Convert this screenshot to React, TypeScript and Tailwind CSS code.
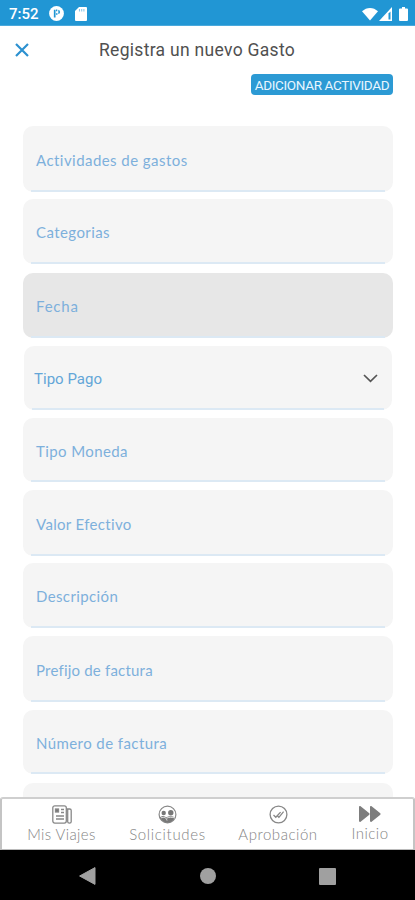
import React from "react";

type Field = { label: string; box: string; text: string; select?: boolean };

const fields: Field[] = [
  { label: "Actividades de gastos", box: "h-[66px] mb-[7px]", text: "tracking-[0.45px]" },
  { label: "Categorias", box: "h-[65px] mb-[9px]", text: "tracking-[0.42px]" },
  { label: "Fecha", box: "h-[65px] mb-[8px] bg-[#e7e7e7]", text: "tracking-[0.8px]" },
  { label: "Tipo Pago", box: "h-[64px] mb-[8px] mx-px", text: "", select: true },
  { label: "Tipo Moneda", box: "h-[64px] mb-[8px]", text: "tracking-[0.4px]" },
  { label: "Valor Efectivo", box: "h-[66px] mb-[7px]", text: "tracking-[0.33px]" },
  { label: "Descripción", box: "h-[65px] mb-[8px]", text: "tracking-[0.38px]" },
  { label: "Prefijo de factura", box: "h-[66px] mb-[8px]", text: "tracking-[0.2px]" },
  { label: "Número de factura", box: "h-[64px] mb-[9px]", text: "tracking-[0.42px]" },
  { label: "", box: "h-[65px]", text: "" },
];

function FieldRow({ label, box, text, select }: Field) {
  return (
    <div className={`flex shrink-0 flex-col rounded-[10px] ${box} ${box.includes("bg-") ? "" : "bg-[#f5f5f5]"}`}>
      <div className={`flex flex-1 items-center justify-between pt-[3px] ${select ? "pl-[10px] pr-[14px]" : "pl-[13px]"}`}>
        <span
          className={
            select
              ? "font-[Roboto,sans-serif] text-[15px] leading-5 tracking-[0.02px] text-[#63a6d8]"
              : `font-[Lato,sans-serif] text-[15px] leading-5 text-[#7db0dc] ${text}`
          }
        >
          {label}
        </span>
        {select && (
          <svg className="h-[9px] w-[15px]" viewBox="0 0 15 9" fill="none" stroke="#555" strokeWidth="1.7">
            <path d="M1 1l6.500 6.400L14 1" />
          </svg>
        )}
      </div>
      <div className="mx-[8px] h-[2px] bg-[#dce9f4]" />
    </div>
  );
}

export default function App() {
  return (
    <div className="flex h-[900px] w-[415px] flex-col overflow-hidden bg-white">
      <header className="flex h-[26px] shrink-0 items-center border-b border-[#4aa9dc] bg-[#2196d4] pl-[9px] pr-[7px] pt-[2px]">
        <span className="w-[40px] font-[Roboto,sans-serif] text-[15px] font-medium leading-5 text-white">7:52</span>
        <svg className="h-[15px] w-[15px]" viewBox="0 0 15 15">
          <circle cx="7.500" cy="7.500" r="7.400" fill="#fff" />
          <path d="M5.700 11.500V3.800M7 4.300h1.300M7 8h1.500" fill="none" stroke="#2196d4" strokeWidth="1.700" />
          <path d="M9.300 3.800a2.200 2.200 0 0 1 0 4.300z" fill="#2196d4" />
        </svg>
        <svg className="ml-[11px] h-[14px] w-[12px]" viewBox="0 0 12 14">
          <path d="M4 0h7a1 1 0 0 1 1 1v12a1 1 0 0 1-1 1H1a1 1 0 0 1-1-1V4z" fill="#fff" />
          <path d="M4.500 2v2.500M6.700 2v2.500M8.900 2v2.500" stroke="#8cc8e8" strokeWidth="1.100" />
        </svg>
        <svg className="ml-auto h-[14px] w-[16px]" viewBox="0 0 17 14">
          <path d="M0 4.200C5-.6 12-.6 17 4.200L8.500 14z" fill="#fff" />
        </svg>
        <svg className="ml-px h-[14px] w-[13px]" viewBox="0 0 13 14">
          <path d="M0 14L13 0v14z" fill="#fff" />
          <path d="M9.500 6.500l2-2v8h-2z" fill="#2196d4" />
        </svg>
        <svg className="ml-[7px] h-[14px] w-[9px]" viewBox="0 0 9 14">
          <path d="M3 0h3v1.500h2a1 1 0 0 1 1 1V13a1 1 0 0 1-1 1H1a1 1 0 0 1-1-1V2.500a1 1 0 0 1 1-1h2z" fill="#fff" />
        </svg>
      </header>

      <div className="flex h-[48px] shrink-0 items-center pl-[15px]">
        <svg className="h-[14px] w-[14px]" viewBox="0 0 14 14" stroke="#2c91d0" strokeWidth="2.200">
          <path d="M1 1l12 12M13 1L1 13" />
        </svg>
        <h1 className="ml-[70px] whitespace-nowrap font-[Roboto,sans-serif] text-[17.5px] leading-6 tracking-[0.3px] text-[#505050]">
          Registra un nuevo Gasto
        </h1>
      </div>

      <div className="flex h-[52px] shrink-0 justify-end pr-[22px]">
        <button className="flex h-[21px] w-[142px] items-center justify-center whitespace-nowrap rounded-[4px] bg-[#2c9ad4] pt-px font-[Roboto,sans-serif] text-[13.5px] leading-5 tracking-[-0.35px] text-[#e8f6ff]">
          ADICIONAR ACTIVIDAD
        </button>
      </div>

      <main className="flex min-h-0 flex-1 flex-col overflow-hidden pl-[23px] pr-[22px]">
        {fields.map((f, i) => (
          <FieldRow key={i} {...f} />
        ))}
      </main>

      <nav className="flex h-[53px] shrink-0 rounded-t-[3px] border-x-2 border-b border-t-2 border-x-[#c4c4c4] border-b-[#bbb] border-t-[#cfcfcf] bg-white font-[Lato,sans-serif] text-[15px] font-light leading-5 text-[#858585]">
        <div className="flex w-[119px] flex-col items-center pt-[6px]">
          <svg className="h-[19px] w-[20px]" viewBox="0 0 20 19" fill="none" stroke="#888" strokeWidth="1.300">
            <rect x="0.800" y="0.800" width="13.500" height="17.300" rx="2" />
            <path d="M14.500 4h3.200a1.500 1.500 0 0 1 1.500 1.500v11.200c0 1.900-3.500 1.900-3.500 0V4M9 4.500h3M9 7.500h3M4 11h8M4 14h8" />
            <rect x="3.500" y="4" width="3" height="3" fill="#777" />
          </svg>
          <span className="whitespace-nowrap tracking-[0.4px]">Mis Viajes</span>
        </div>
        <div className="flex w-[93px] flex-col items-center pt-[6px]">
          <svg className="h-[19px] w-[19px]" viewBox="0 0 19 19" fill="none" stroke="#888" strokeWidth="1.200">
            <circle cx="9.500" cy="9.500" r="8.400" />
            <path d="M2 12.500c1.700-2 4.500-2 6 0 2.500-1.800 6.500-1.800 9 0-1.300 3-4 5.200-7.500 5.200S3.500 15.800 2 12.500z" fill="#777" stroke="none" />
            <circle cx="5.700" cy="8" r="2.200" fill="#777" stroke="none" />
            <circle cx="12.800" cy="7.700" r="2.700" fill="#777" stroke="none" />
            <path d="M3 12.900c3-1.300 5-.8 6 2.600M9 13c2-1 5-1 8 0" stroke="#fff" strokeWidth=".8" />
          </svg>
          <span className="whitespace-nowrap tracking-[0.67px]">Solicitudes</span>
        </div>
        <div className="flex w-[128px] flex-col items-center pt-[6px]">
          <svg className="h-[19px] w-[19px]" viewBox="0 0 19 19" fill="none" stroke="#888" strokeWidth="1.300">
            <circle cx="9.500" cy="9.500" r="8.400" />
            <path d="M4.500 10l2.300 2.300 4.800-5.200M8.500 11l1.400 1.300 4.700-5.600" />
          </svg>
          <span className="whitespace-nowrap tracking-[0.55px]">Aprobación</span>
        </div>
        <div className="flex w-[56px] flex-col items-center pt-[7px]">
          <svg className="h-[16px] w-[22px]" viewBox="0 0 22 16" fill="#7d7d7d">
            <path d="M0 1.200C0 .2.800-.3 1.600.3L10 7c.8.700.8 1.300 0 2l-8.400 6.700c-.8.600-1.600.100-1.600-.9zM11 1.200c0-1 .8-1.500 1.600-.9L21 7c.8.700.8 1.300 0 2l-8.400 6.700c-.8.600-1.600.1-1.600-.9z" />
          </svg>
          <span className="mt-px whitespace-nowrap tracking-[0.5px]">Inicio</span>
        </div>
      </nav>

      <footer className="flex h-[50px] shrink-0 items-center bg-black pl-[79px] pt-[2px]">
        <svg className="h-[18px] w-[17px]" viewBox="0 0 17 18">
          <path d="M16 0.600v16.800L0.600 9z" fill="#a0a0a0" stroke="#a0a0a0" strokeLinejoin="round" />
        </svg>
        <div className="ml-[104px] h-[16px] w-[16px] rounded-full bg-[#a0a0a0]" />
        <div className="ml-[103px] h-[17px] w-[17px] rounded-[1px] bg-[#a0a0a0]" />
      </footer>
    </div>
  );
}
